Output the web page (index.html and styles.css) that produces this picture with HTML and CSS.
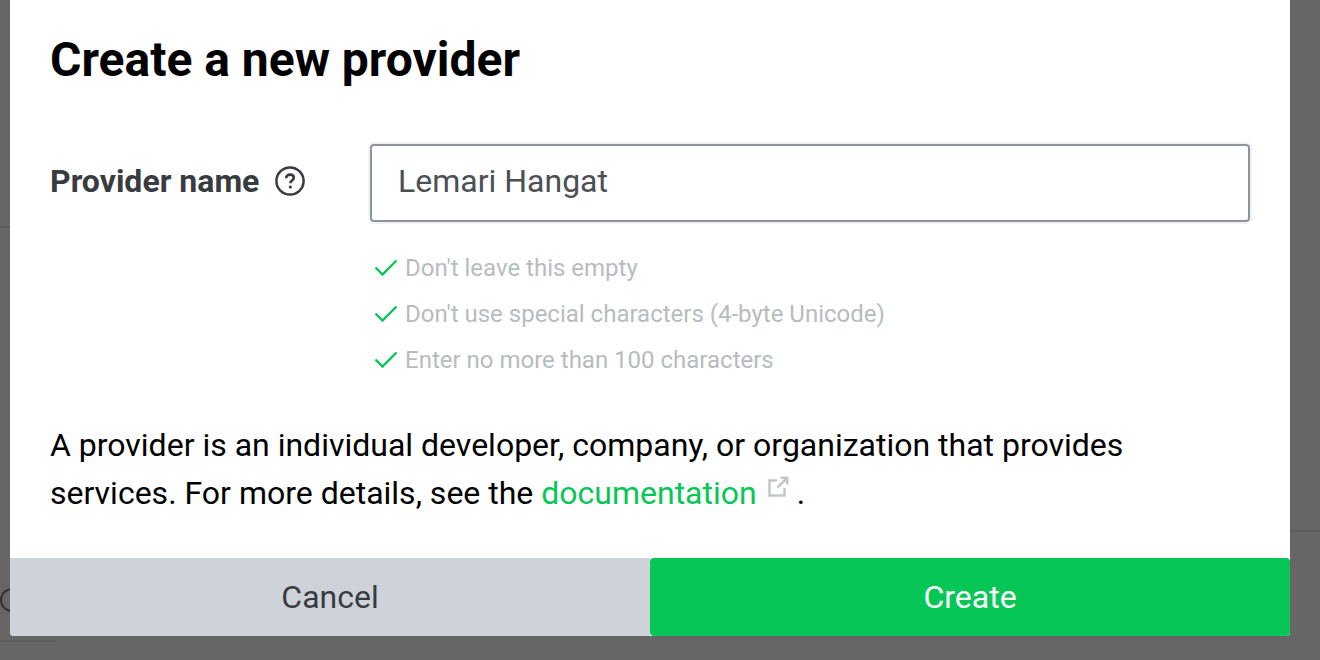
FILE: index.html
```html
<!DOCTYPE html>
<html lang="en">
<head>
<meta charset="utf-8">
<title>Create a new provider</title>
<link rel="stylesheet" href="styles.css">
</head>
<body>
<div class="backdrop-line line-left"></div>
<div class="backdrop-line line-right"></div>
<div class="backdrop-line line-bottom"></div>
<div class="backdrop-circle"></div>
<div class="modal">
  <div class="modal-body">
    <h1 class="title">Create a new provider</h1>
    <div class="field">
      <div class="label-col">
        <span class="label">Provider name</span>
        <svg class="help" width="30" height="30" viewBox="0 0 30 30" aria-hidden="true">
          <circle cx="15" cy="15" r="13.6" fill="none" stroke="#383c40" stroke-width="2.500"/>
          <path d="M11.2 12.200c0-2.200 1.700-3.600 3.900-3.600 2.200 0 3.700 1.300 3.700 3.200 0 2.700-3.500 2.800-3.500 5.500" fill="none" stroke="#383c40" stroke-width="2.600"/>
          <circle cx="15.300" cy="21" r="1.600" fill="#383c40"/>
        </svg>
      </div>
      <div class="input-col">
        <div class="input">Lemari Hangat</div>
        <ul class="hints">
          <li class="hint"><svg class="check" width="24" height="18" viewBox="0 0 24 18" aria-hidden="true"><path d="M1.500 8.500l7 7L22.500 1.500" fill="none" stroke="#06c755" stroke-width="2.400"/></svg>Don't leave this empty</li>
          <li class="hint"><svg class="check" width="24" height="18" viewBox="0 0 24 18" aria-hidden="true"><path d="M1.500 8.500l7 7L22.500 1.500" fill="none" stroke="#06c755" stroke-width="2.400"/></svg>Don't use special characters (4-byte Unicode)</li>
          <li class="hint"><svg class="check" width="24" height="18" viewBox="0 0 24 18" aria-hidden="true"><path d="M1.500 8.500l7 7L22.500 1.500" fill="none" stroke="#06c755" stroke-width="2.400"/></svg>Enter no more than 100 characters</li>
        </ul>
      </div>
    </div>
    <p class="desc">A provider is an individual developer, company, or organization that provides services. For more details, see the <a class="link" href="#">documentation</a><svg class="ext" width="22" height="22" viewBox="0 0 22 22" aria-hidden="true"><path d="M10 4.500H2.500v15h15V12M10.500 11.500L20 2M13.500 1.800h6.700v6.700" fill="none" stroke="#c4c7ca" stroke-width="2.500"/></svg> .</p>
  </div>
  <div class="actions">
    <button class="btn cancel" type="button">Cancel</button>
    <button class="btn create" type="button">Create</button>
  </div>
</div>
</body>
</html>
```

FILE: styles.css
```css
* { box-sizing: border-box; }
html, body { margin: 0; height: 100%; }
body {
  position: relative;
  width: 1320px;
  height: 660px;
  overflow: hidden;
  background: #666666;
  font-family: Roboto, "Liberation Sans", sans-serif;
}
.backdrop-line { position: absolute; background: #5c5c5c; height: 2px; }
.line-left { left: 0; top: 226px; width: 10px; }
.line-right { left: 1290px; top: 530px; width: 30px; }
.line-bottom { left: 0; top: 640px; width: 56px; }
.backdrop-circle {
  position: absolute;
  left: 0;
  top: 588px;
  width: 24px;
  height: 24px;
  border: 2px solid #333;
  border-radius: 50%;
}
.modal {
  position: absolute;
  left: 10px;
  top: 0;
  width: 1280px;
  height: 636px;
  background: #fff;
  display: flex;
  flex-direction: column;
  border-radius: 0 0 4px 4px;
}
.modal-body { flex: 1; padding: 30px 40px 0; }
.title {
  margin: 0;
  font-size: 48px;
  line-height: 60px;
  font-weight: 700;
  color: #000;
}
.field { display: flex; margin-top: 54px; }
.label-col {
  width: 320px;
  flex: none;
  display: flex;
  align-items: center;
  gap: 15px;
  height: 74px;
}
.label { font-size: 32px; font-weight: 700; color: #383c40; }
.help { flex: none; margin-top: -1px; margin-left: 1px; }
.input-col { flex: 1; }
.input {
  height: 78px;
  border: 2px solid #8f939c;
  border-radius: 4px;
  box-shadow: 0 0 0 2px #f1f2f4;
  padding: 0 26px;
  font-size: 32px;
  line-height: 70px;
  color: #4b5055;
}
.hints { list-style: none; margin: 23px 0 0; padding: 0 0 0 4px; }
.hint {
  display: flex;
  align-items: center;
  gap: 7px;
  height: 46px;
  font-size: 24px;
  color: #b7bcc0;
}
.check { flex: none; }
.desc {
  margin: 38px 0 0;
  font-size: 32px;
  line-height: 48px;
  color: #000;
}
.link { color: #06c755; text-decoration: none; }
.ext { margin-left: 10px; vertical-align: 6px; }
.actions { display: flex; height: 78px; flex: none; }
.btn {
  flex: 1;
  border: 0;
  font-family: inherit;
  font-size: 32px;
  padding: 0;
}
.cancel { background: #ced3db; color: #383c40; border-radius: 0 0 0 4px; }
.create { background: #06c755; color: #fff; border-radius: 4px; }
```
